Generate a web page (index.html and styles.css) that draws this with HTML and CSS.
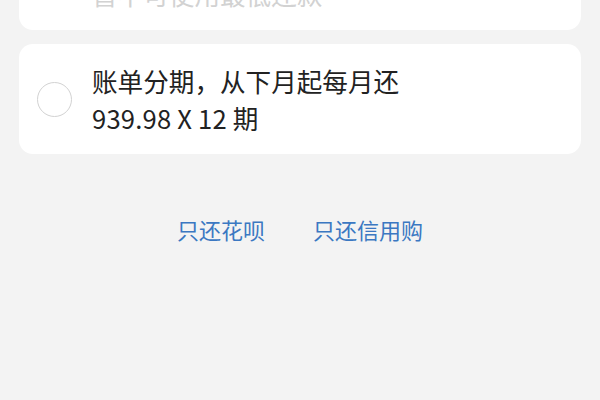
FILE: index.html
```html
<!DOCTYPE html>
<html lang="zh">
<head>
<meta charset="utf-8">
<link rel="stylesheet" href="styles.css">
</head>
<body>
<div class="page">
  <div class="card card-top">
    <span class="radio radio-disabled"></span>
    <div class="text disabled">
      <div class="line">最低还款</div>
      <div class="line">暂不可使用最低还款</div>
    </div>
  </div>
  <div class="card">
    <span class="radio"></span>
    <div class="text">
      <div class="line">账单分期，从下月起每月还</div>
      <div class="line digits">939.98 X 12 期</div>
    </div>
  </div>
  <div class="links">
    <span class="link">只还花呗</span>
    <span class="link">只还信用购</span>
  </div>
</div>
</body>
</html>
```

FILE: styles.css
```css
html, body {
  margin: 0;
  padding: 0;
  background: #f3f3f3;
  font-family: "Noto Sans CJK SC", "Noto Sans", sans-serif;
  overflow: hidden;
}
.page {
  width: 600px;
  height: 400px;
  padding: 0 19px;
  box-sizing: border-box;
  display: flex;
  flex-direction: column;
}
.card {
  background: #ffffff;
  border-radius: 14px;
  padding: 18px 0;
  display: flex;
  align-items: center;
  margin-bottom: 14px;
}
.card-top {
  margin-top: -80px;
}
.radio {
  width: 33px;
  height: 33px;
  border: 1.6px solid #d2d2d2;
  border-radius: 50%;
  margin-left: 18px;
  margin-right: 20px;
  flex: none;
}
.radio-disabled {
  border-color: #e6e6e6;
}
.text {
  color: #222222;
  font-size: 25.6px;
  line-height: 37px;
}
.digits {
  letter-spacing: 0.2px;
}
.text.disabled {
  color: #d2d2d2;
}
.links {
  margin-top: 46px;
  display: flex;
  justify-content: center;
  gap: 48px;
}
.link {
  color: #3b78c2;
  font-size: 22px;
  line-height: 30px;
}
```
